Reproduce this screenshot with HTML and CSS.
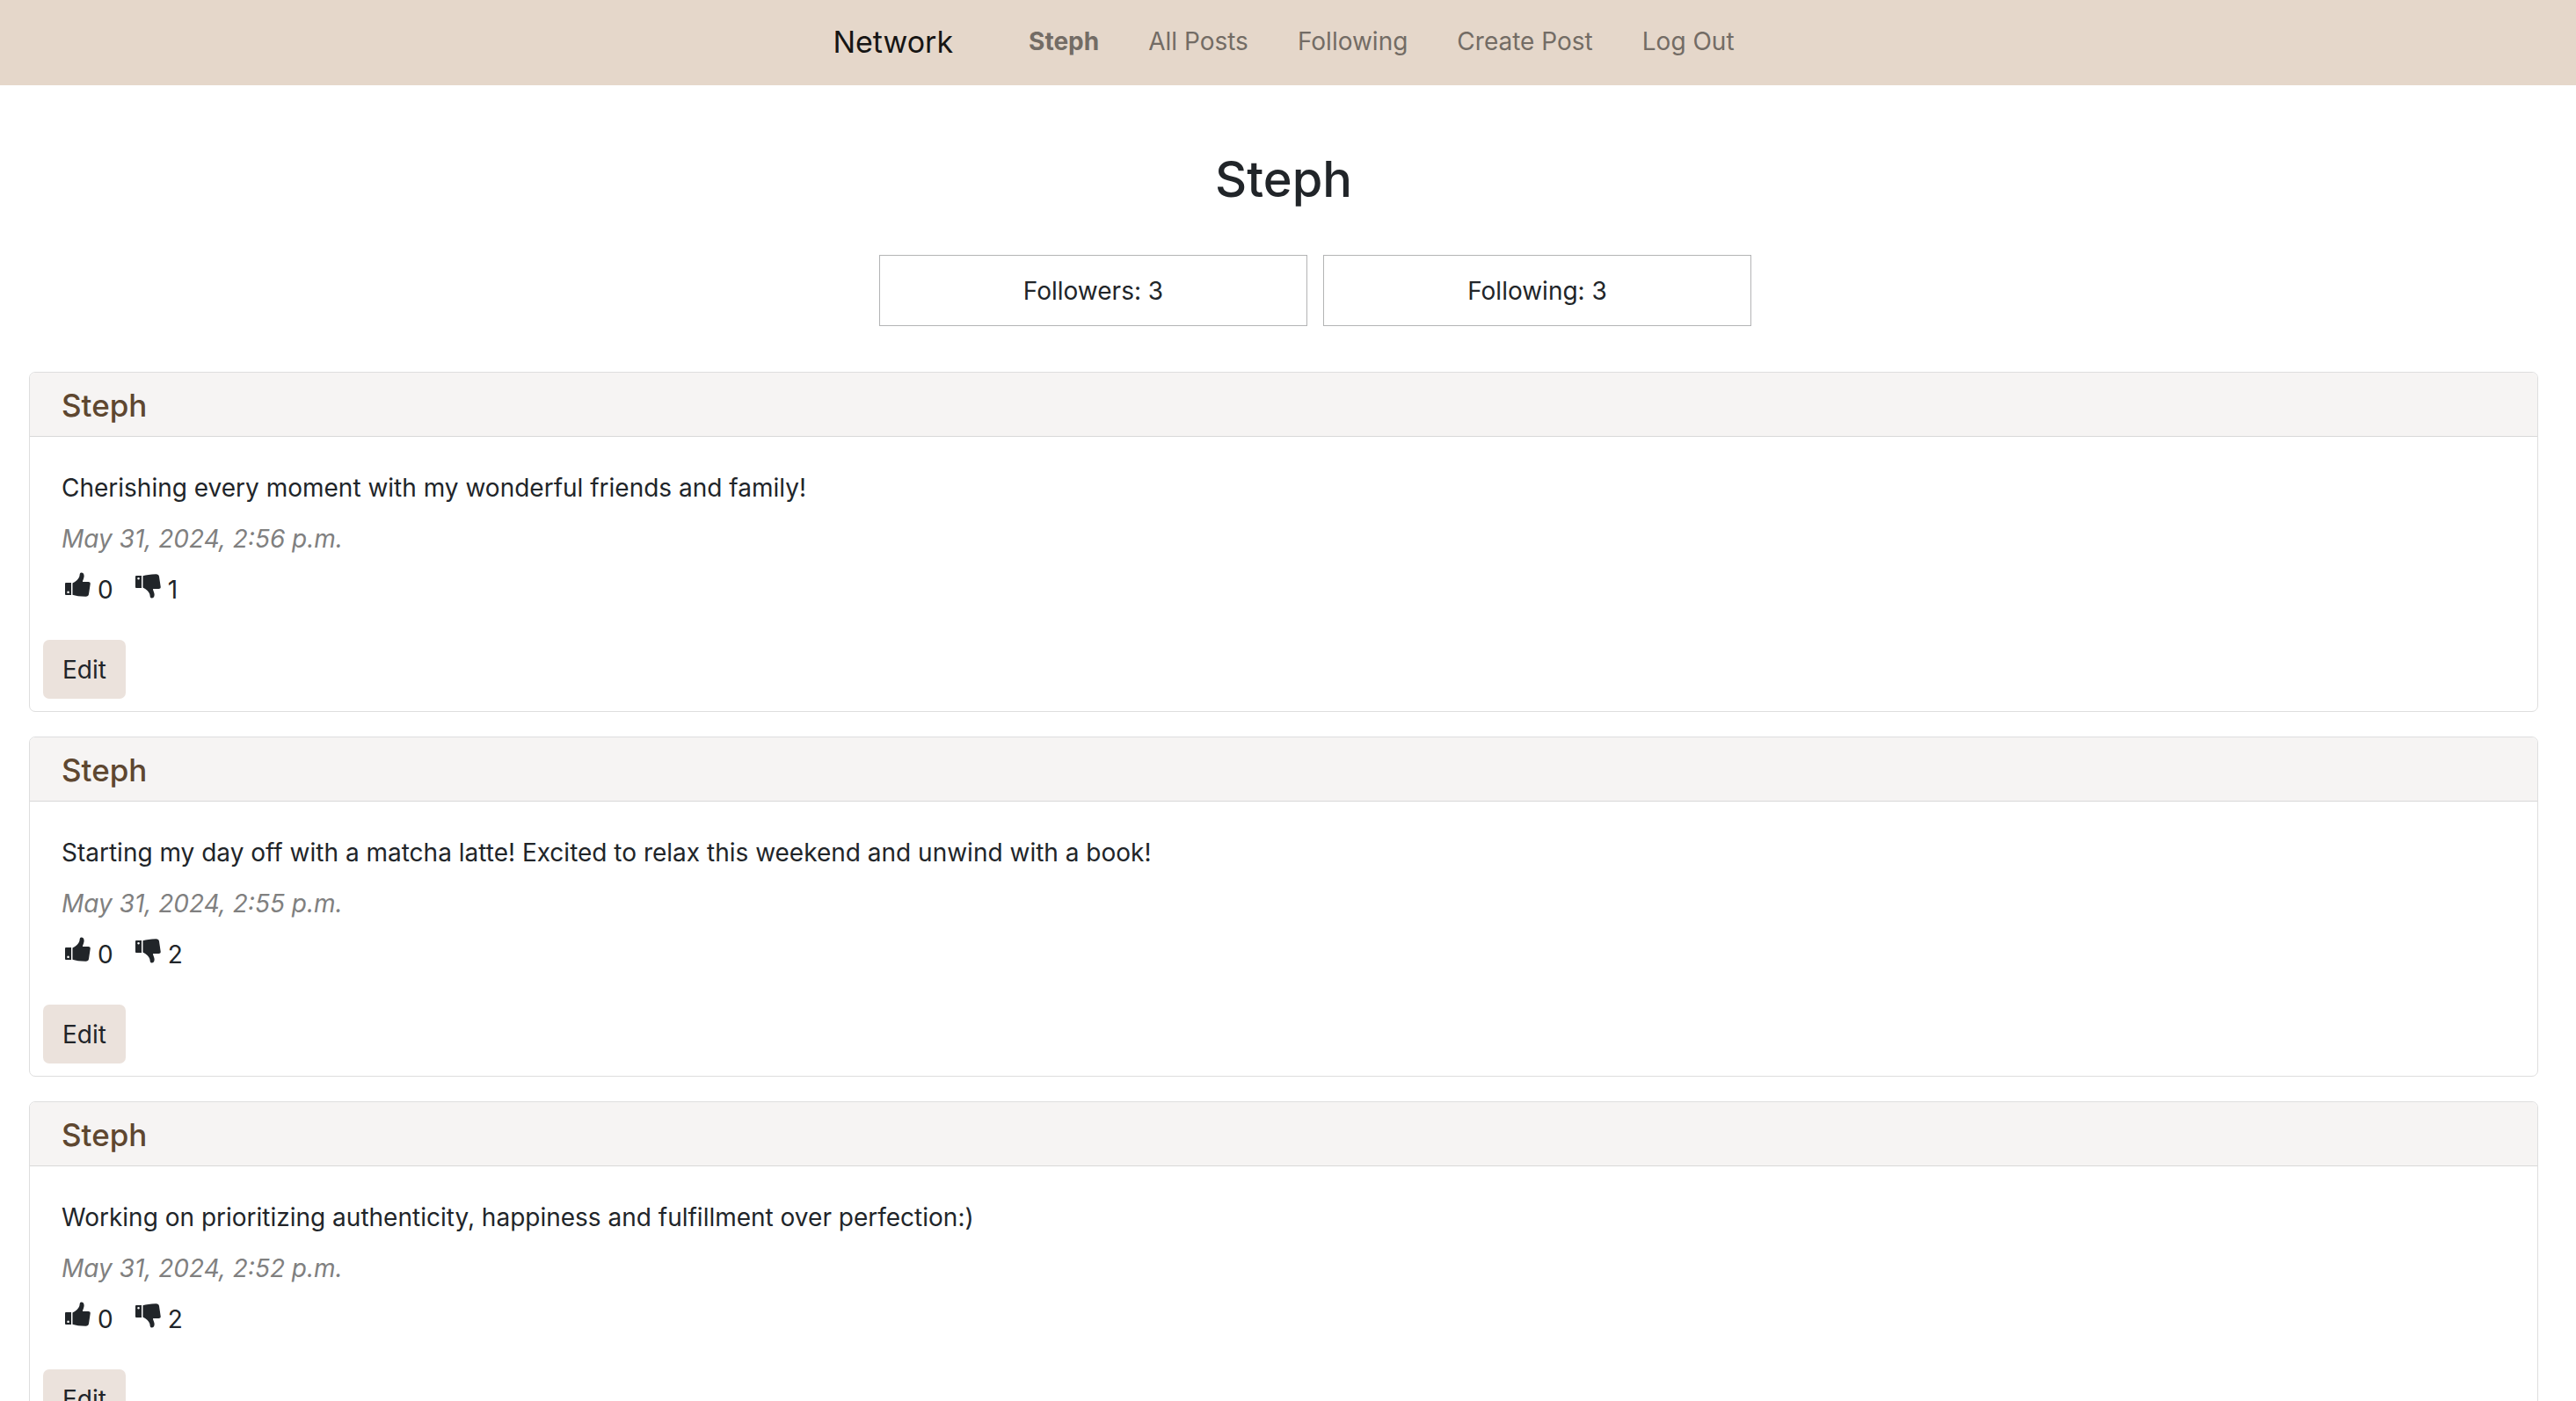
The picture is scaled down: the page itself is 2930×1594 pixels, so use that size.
FILE: index.html
```html
<!DOCTYPE html>
<html lang="en">
<head>
<meta charset="utf-8">
<meta name="viewport" content="width=device-width, initial-scale=1">
<title>Network</title>
<link rel="stylesheet" href="styles.css">
</head>
<body>
<svg class="sprite" aria-hidden="true">
  <symbol id="thumb-up" viewBox="0 0 30 30">
    <path fill-rule="evenodd" d="M2 13H8V27H2Q1 27 1 26V14Q1 13 2 13ZM4.500 22.500a1.300 1.300 0 1 0 .1 0Z"/>
    <path d="M9.500 13.500C13 12 17 8.500 17.500 5C17.700 2.800 18 1.500 19.500 1.500C22 1.500 23 4 22.500 6.500C22 9 21 10.500 21 12H27.500Q30.200 12 29.700 14.500L28 26Q27.500 28.800 24.500 28.800C18 28.800 13 27.800 9.500 26.800Z"/>
  </symbol>
</svg>
<header class="navbar">
  <a class="brand" href="#">Network</a>
  <nav class="links">
    <a href="#"><strong>Steph</strong></a>
    <a href="#">All Posts</a>
    <a href="#">Following</a>
    <a href="#">Create Post</a>
    <a href="#">Log Out</a>
  </nav>
</header>
<main class="page">
  <h1>Steph</h1>
  <div class="stats">
    <div class="stat">Followers: 3</div>
    <div class="stat">Following: 3</div>
  </div>
  <article class="card">
    <h2><a href="#">Steph</a></h2>
    <div class="body">
      <p>Cherishing every moment with my wonderful friends and family!</p>
      <p class="date">May 31, 2024, 2:56 p.m.</p>
      <div class="votes">
        <span class="vote"><svg class="icon"><use href="#thumb-up"/></svg>0</span>
        <span class="vote"><svg class="icon down"><use href="#thumb-up"/></svg>1</span>
      </div>
    </div>
    <button class="edit" type="button">Edit</button>
  </article>
  <article class="card">
    <h2><a href="#">Steph</a></h2>
    <div class="body">
      <p>Starting my day off with a matcha latte! Excited to relax this weekend and unwind with a book!</p>
      <p class="date">May 31, 2024, 2:55 p.m.</p>
      <div class="votes">
        <span class="vote"><svg class="icon"><use href="#thumb-up"/></svg>0</span>
        <span class="vote"><svg class="icon down"><use href="#thumb-up"/></svg>2</span>
      </div>
    </div>
    <button class="edit" type="button">Edit</button>
  </article>
  <article class="card">
    <h2><a href="#">Steph</a></h2>
    <div class="body">
      <p>Working on prioritizing authenticity, happiness and fulfillment over perfection:)</p>
      <p class="date">May 31, 2024, 2:52 p.m.</p>
      <div class="votes">
        <span class="vote"><svg class="icon"><use href="#thumb-up"/></svg>0</span>
        <span class="vote"><svg class="icon down"><use href="#thumb-up"/></svg>2</span>
      </div>
    </div>
    <button class="edit" type="button">Edit</button>
  </article>
</main>
</body>
</html>
```
FILE: styles.css
```css
* { box-sizing: border-box; }
body {
  margin: 0;
  font: 28px/43px Inter, "Liberation Sans", sans-serif;
  color: #212529;
  background: #fff;
}
a { color: inherit; text-decoration: none; }
.sprite { display: none; }

.navbar {
  display: flex;
  justify-content: center;
  align-items: center;
  gap: 86px;
  padding: 17px 10px 19px 0;
  line-height: 61px;
  background: #e5d7ca;
}
.brand { font-size: 34px; color: #161514; }
.links { display: flex; gap: 56px; color: #736c65; }

.page { padding: 72px 43px 0 33px; }
h1 {
  margin: 0 0 50px;
  font-size: 56px;
  font-weight: 500;
  line-height: 71px;
  text-align: center;
}
.stats {
  display: flex;
  justify-content: center;
  gap: 18px;
  margin-bottom: 52px;
  padding-left: 72px;
}
.stat {
  width: 487px;
  padding: 19px 18px 17px;
  border: 1px solid #b3b4b5;
  text-align: center;
}

.card {
  margin-bottom: 28px;
  border: 1px solid #dedede;
  border-radius: 7px;
}
h2 {
  margin: 0;
  padding: 15px 36px 13px;
  font-size: 35px;
  font-weight: 500;
  line-height: 44px;
  color: #5e4730;
  background: #f6f4f3;
  border-bottom: 1px solid #d8d8d8;
  border-radius: 6px 6px 0 0;
}
.body { padding: 37px 36px 35px; }
p { margin: 0 0 15px; }
.date { font-style: italic; color: #808080; }
.votes { display: flex; gap: 21px; }
.vote { display: flex; gap: 8px; }
.icon { width: 30px; height: 30px; margin-left: 3px; fill: #212529; }
.icon.down { margin-top: 2px; transform: scaleY(-1); }
.edit {
  display: block;
  margin: 0 15px 14px;
  padding: 13px 22px 11px;
  font: inherit;
  color: inherit;
  background: #ebe2dc;
  border: 0;
  border-radius: 7px;
}
```
